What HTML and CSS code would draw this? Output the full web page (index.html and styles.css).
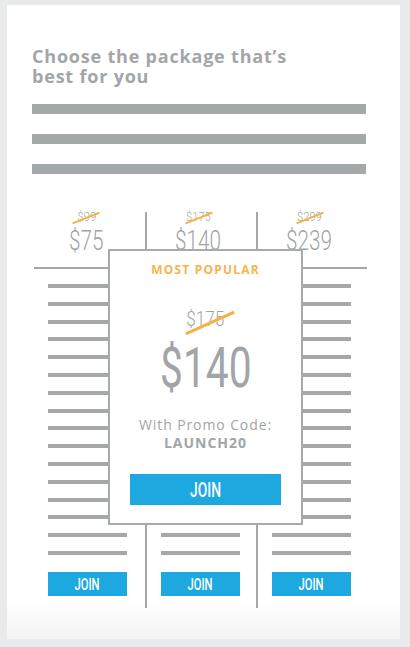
FILE: index.html
```html
<!DOCTYPE html>
<html>
<head>
<meta charset="utf-8">
<title>Pricing</title>
<link rel="stylesheet" href="styles.css">
</head>
<body>
<div class="card">
  <h1 class="title">Choose the package that’s<br>best for you</h1>
  <div class="bars">
    <div class="bar"></div>
    <div class="bar"></div>
    <div class="bar"></div>
  </div>
  <div class="pricing">
    <div class="col">
      <div class="head">
        <span class="old"><span class="num">$99</span></span>
        <span class="price"><span class="num">$75</span></span>
      </div>
      <div class="body">
        <div class="line"></div><div class="line"></div><div class="line"></div><div class="line"></div>
        <div class="line"></div><div class="line"></div><div class="line"></div><div class="line"></div>
        <div class="line"></div><div class="line"></div><div class="line"></div><div class="line"></div>
        <div class="line"></div><div class="line"></div><div class="line"></div><div class="line"></div>
        <a class="join"><span class="join-text">JOIN</span></a>
      </div>
    </div>
    <div class="col">
      <div class="head">
        <span class="old"><span class="num">$175</span></span>
        <span class="price"><span class="num">$140</span></span>
      </div>
      <div class="body">
        <div class="line"></div><div class="line"></div><div class="line"></div><div class="line"></div>
        <div class="line"></div><div class="line"></div><div class="line"></div><div class="line"></div>
        <div class="line"></div><div class="line"></div><div class="line"></div><div class="line"></div>
        <div class="line"></div><div class="line"></div><div class="line"></div><div class="line"></div>
        <a class="join"><span class="join-text">JOIN</span></a>
      </div>
    </div>
    <div class="col">
      <div class="head">
        <span class="old"><span class="num">$299</span></span>
        <span class="price"><span class="num">$239</span></span>
      </div>
      <div class="body">
        <div class="line"></div><div class="line"></div><div class="line"></div><div class="line"></div>
        <div class="line"></div><div class="line"></div><div class="line"></div><div class="line"></div>
        <div class="line"></div><div class="line"></div><div class="line"></div><div class="line"></div>
        <div class="line"></div><div class="line"></div><div class="line"></div><div class="line"></div>
        <a class="join"><span class="join-text">JOIN</span></a>
      </div>
    </div>

    <div class="popular">
      <div class="badge">MOST POPULAR</div>
      <span class="pop-old"><span class="num">$175</span></span>
      <span class="pop-price"><span class="num">$140</span></span>
      <div class="promo">With Promo Code:</div>
      <div class="code">LAUNCH20</div>
      <a class="join-big"><span class="join-text">JOIN</span></a>
    </div>
  </div>
</div>
</body>
</html>
```
FILE: styles.css
```css
body {
  margin: 0;
  background: #e9eaec;
}

.card {
  margin: 5px 0 0 7px;
  width: 393px;
  height: 634px;
  box-sizing: border-box;
  padding: 41px 0 0 25px;
  background: linear-gradient(to bottom, #ffffff 0, #ffffff 595px, #f4f4f5 634px);
}

.title {
  margin: 0;
  font: 700 18px/20px "Open Sans", sans-serif;
  letter-spacing: 0.8px;
  color: #a3a6a8;
}

.bars {
  margin-top: 18px;
  width: 334px;
  display: flex;
  flex-direction: column;
  gap: 20px;
}

.bar {
  height: 10px;
  background: #a5a8a9;
}

.pricing {
  position: relative;
  margin: 38px 0 0 2px;
  width: 333px;
  display: grid;
  grid-template-columns: repeat(3, 111px);
}

.col {
  display: flex;
  flex-direction: column;
}

.col + .col {
  border-left: 2px solid #a5a8a9;
}

.head {
  height: 57px;
  box-sizing: border-box;
  border-bottom: 2px solid #a5a8a9;
  display: flex;
  flex-direction: column;
  align-items: center;
  padding-right: 6px;
}

.num {
  display: inline-block;
  font-family: Roboto, "Liberation Sans", sans-serif;
  font-weight: 400;
  color: #a2a5a7;
}

.old {
  position: relative;
  margin-top: -2px;
  font-size: 13px;
  line-height: 13px;
}

.old .num {
  font-weight: 300;
  transform: scaleX(0.86);
}

.old::after {
  content: "";
  position: absolute;
  left: 50%;
  top: 58%;
  width: 29px;
  height: 2px;
  background: #f7b13f;
  transform: translate(-50%, -50%) rotate(-22deg);
}

.price {
  margin-top: 4px;
  font-size: 28px;
  line-height: 28px;
}

.price .num {
  font-weight: 300;
  transform: scaleX(0.74);
}

.body {
  padding: 15px 0 12px 14px;
  display: flex;
  flex-direction: column;
}

.line {
  width: 79px;
  height: 4px;
  background: #a5a8a9;
}

.line + .line {
  margin-top: 13.8px;
}

.join {
  margin-top: 17px;
  width: 79px;
  height: 24px;
  background: #1ea8e0;
  display: flex;
  align-items: center;
  justify-content: center;
  font: 500 17px Roboto, "Liberation Sans", sans-serif;
  color: #ffffff;
}

.join-text {
  display: inline-block;
  transform: scaleX(0.66);
}

.popular {
  position: absolute;
  left: 74px;
  top: 37px;
  width: 195px;
  height: 276px;
  box-sizing: border-box;
  border: 2px solid #a7aaab;
  background: #ffffff;
  display: flex;
  flex-direction: column;
  align-items: center;
}

.badge {
  margin-top: 12px;
  font: 700 12px/14px "Open Sans", sans-serif;
  letter-spacing: 1.2px;
  color: #f7b54a;
}

.pop-old {
  position: relative;
  margin-top: 30px;
  font-size: 21px;
  line-height: 24px;
}

.pop-old .num {
  font-weight: 300;
  transform: scaleX(0.82);
}

.pop-old::after {
  content: "";
  position: absolute;
  left: 50%;
  top: 68%;
  margin-left: 4px;
  width: 53px;
  height: 3px;
  background: #f7b13f;
  transform: translate(-50%, -50%) rotate(-24deg);
}

.pop-price {
  margin-top: 9px;
  font-size: 55px;
  line-height: 56px;
}

.pop-price .num {
  transform: scaleX(0.74);
}

.promo {
  margin-top: 19px;
  font: 400 14px/18px "Open Sans", sans-serif;
  letter-spacing: 0.9px;
  color: #a2a5a7;
}

.code {
  font: 700 14px/18px "Open Sans", sans-serif;
  letter-spacing: 1px;
  color: #a2a5a7;
}

.join-big {
  margin-top: 22px;
  width: 151px;
  height: 31px;
  background: #1ea8e0;
  display: flex;
  align-items: center;
  justify-content: center;
  font: 500 21px Roboto, "Liberation Sans", sans-serif;
  color: #ffffff;
}

.join-big .join-text {
  transform: scaleX(0.66);
}
```
